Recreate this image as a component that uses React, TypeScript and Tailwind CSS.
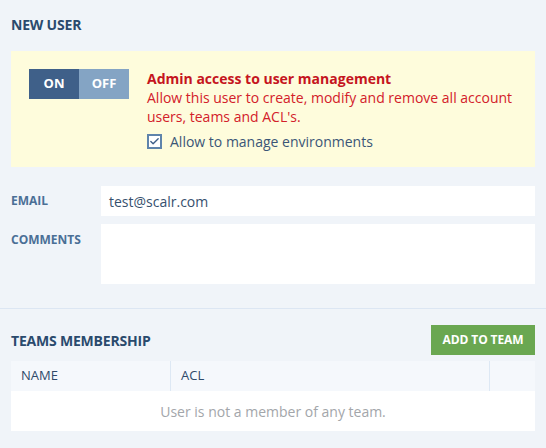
import { Check } from 'lucide-react'

export default function App() {
  return (
    <div className="w-[546px] h-[448px] bg-[#f0f4f9] font-['Open_Sans',sans-serif] overflow-hidden">
      <div className="px-[11px]">
        <h2 className="pt-[14px] h-[51px] text-[14px] font-bold text-[#2a4a6d] tracking-[-0.2px]">NEW USER</h2>

        <div className="bg-[#fefcdc] h-[116px] flex pl-[18px] pt-[18px]">
          <div className="flex h-[30px] text-[13px] font-bold text-white">
            <div className="w-[50px] bg-[#3f6089] flex items-center justify-center">ON</div>
            <div className="w-[50px] bg-[#84a4c4] flex items-center justify-center">OFF</div>
          </div>
          <div className="ml-[18px] mt-[1px]">
            <div className="text-[14px] font-bold text-[#c51420] leading-[18px]">Admin access to user management</div>
            <div className="text-[14px] text-[#d3202a] leading-[19px] w-[370px]">
              Allow this user to create, modify and remove all account users, teams and ACL's.
            </div>
            <label className="flex items-center mt-[5px] text-[14px] text-[#3b5677]">
              <span className="w-[15px] h-[15px] border-2 border-[#5f84ab] bg-white flex items-center justify-center">
                <Check size={11} strokeWidth={3} className="text-[#3f6089]" />
              </span>
              <span className="ml-[8px]">Allow to manage environments</span>
            </label>
          </div>
        </div>

        <div className="flex items-center mt-[19px]">
          <div className="w-[90px] text-[12px] font-bold text-[#4a6f96]">EMAIL</div>
          <div className="flex-1 h-[30px] bg-white flex items-center px-[8px] text-[14px] text-[#36506e]">test@scalr.com</div>
        </div>
        <div className="flex mt-[8px]">
          <div className="w-[90px] text-[12px] font-bold text-[#4a6f96] pt-[7px]">COMMENTS</div>
          <div className="flex-1 h-[60px] bg-white" />
        </div>
      </div>

      <div className="mt-[24px] border-t border-[#dce6f3]" />

      <div className="px-[11px]">
        <div className="flex items-center justify-between mt-[16px] h-[30px]">
          <h2 className="text-[14px] font-bold text-[#2a4a6d] tracking-[-0.2px]">TEAMS MEMBERSHIP</h2>
          <button className="h-[30px] w-[104px] bg-[#6aa751] text-white text-[12px] font-bold tracking-[-0.1px]">ADD TO TEAM</button>
        </div>
        <div className="mt-[6px]">
          <div className="flex h-[30px] bg-[#f5f8fc] text-[13px] text-[#2e4a6a]">
            <div className="w-[160px] border-r border-[#dde8f4] flex items-center pl-[10px]">NAME</div>
            <div className="w-[319px] border-r border-[#dde8f4] flex items-center pl-[10px]">ACL</div>
            <div className="flex-1" />
          </div>
          <div className="h-[40px] bg-white flex items-center justify-center text-[14px] text-[#a3a6aa]">
            User is not a member of any team.
          </div>
        </div>
      </div>
    </div>
  )
}
